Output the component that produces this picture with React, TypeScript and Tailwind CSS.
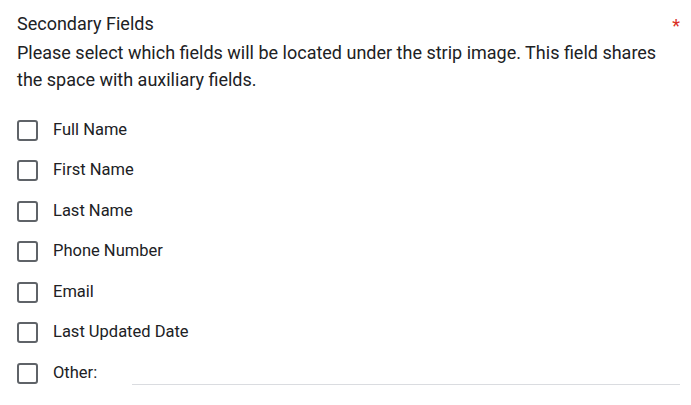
const options = [
  "Full Name",
  "First Name",
  "Last Name",
  "Phone Number",
  "Email",
  "Last Updated Date",
];

function Box() {
  return (
    <span className="h-[21px] w-[21px] shrink-0 rounded-[3px] border-[2.5px] border-[#5f6368] bg-white" />
  );
}

export default function App() {
  return (
    <div
      className="h-[405px] w-[691px] overflow-hidden bg-white pl-[17px] pr-[11px] pt-[10px] text-[#202124]"
      style={{ fontFamily: "Roboto, 'Noto Sans', sans-serif" }}
    >
      <div className="flex items-start justify-between">
        <h2 className="text-[18px] leading-[27px]">Secondary Fields</h2>
        <span className="mt-[2px] text-[18px] leading-[27px] text-[#d93025]">*</span>
      </div>
      <p className="pr-[20px] text-[18px] leading-[27px]">
        Please select which fields will be located under the strip image. This field shares
        the space with auxiliary fields.
      </p>

      <ul className="mt-[17px] flex flex-col">
        {options.map((o) => (
          <li key={o} className="flex h-[40.5px] items-center gap-[15px]">
            <Box />
            <span className="text-[16.5px]">{o}</span>
          </li>
        ))}
        <li className="flex h-[40.5px] items-center gap-[15px]">
          <Box />
          <span className="text-[16.5px]">Other:</span>
          <span className="ml-[20px] mt-[23px] h-px flex-1 bg-[#dadce0]" />
        </li>
      </ul>
    </div>
  );
}
